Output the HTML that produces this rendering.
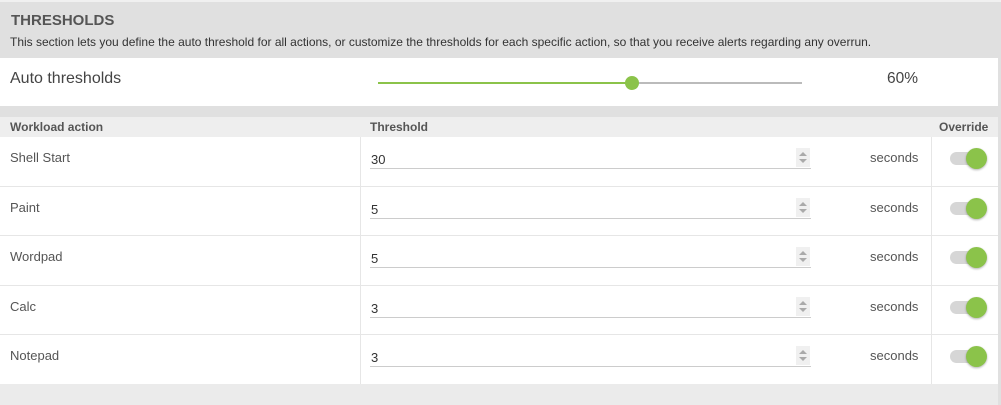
<!DOCTYPE html>
<html><head><meta charset="utf-8"><style>
*{margin:0;padding:0;box-sizing:border-box}
body{width:1001px;height:405px;background:#ebebeb;font-family:"Liberation Sans",Arial,sans-serif;position:relative;overflow:hidden;color:#444}
.a{position:absolute}
.row{position:absolute;left:0;width:998px;height:49px;background:#fff;border-bottom:1px solid #e6e6e6}
.name{position:absolute;left:10px;top:13px;font-size:13px;color:#555}
.val{position:absolute;left:371px;top:15px;font-size:13px;color:#333}
.ul{position:absolute;left:370px;top:31px;width:441px;height:1px;background:#ccc}
.spin{position:absolute;left:796px;top:11px;width:14px;height:19px;background:#f0f0f0}
.spin:before{content:"";position:absolute;left:3px;top:4px;border-left:4px solid transparent;border-right:4px solid transparent;border-bottom:4px solid #aaa}
.spin:after{content:"";position:absolute;left:3px;top:11px;border-left:4px solid transparent;border-right:4px solid transparent;border-top:4px solid #aaa}
.sec{position:absolute;left:870px;top:13px;font-size:13px;color:#555}
.d1{position:absolute;left:360px;top:0;width:1px;height:49px;background:#e6e6e6}
.d2{position:absolute;left:931px;top:0;width:1px;height:49px;background:#e6e6e6}
.tr{position:absolute;left:950px;top:15px;width:36px;height:13px;border-radius:7px;background:#d6d6d6}
.kn{position:absolute;left:966px;top:11px;width:21px;height:21px;border-radius:50%;background:#8bc34a;box-shadow:0 1px 2px rgba(0,0,0,.3)}
</style></head><body>
<div class="a" style="left:0;top:0;width:1001px;height:2px;background:#f0f0f0"></div>
<div class="a" style="left:0;top:2px;width:1001px;height:56px;background:#e0e0e0"></div>
<div class="a" style="left:11px;top:12px;font-size:15px;font-weight:bold;color:#555">THRESHOLDS</div>
<div class="a" style="left:10px;top:35px;font-size:12px;color:#333;white-space:nowrap">This section lets you define the auto threshold for all actions, or customize the thresholds for each specific action, so that you receive alerts regarding any overrun.</div>
<div class="a" style="left:0;top:58px;width:998px;height:48px;background:#fff"></div>
<div class="a" style="left:998px;top:58px;width:3px;height:347px;background:#e0e0e0"></div>
<div class="a" style="left:10px;top:70px;font-size:16px;color:#444">Auto thresholds</div>
<div class="a" style="left:378px;top:82px;width:254px;height:2px;background:#8bc34a"></div>
<div class="a" style="left:632px;top:82px;width:170px;height:2px;background:#bbb"></div>
<div class="a" style="left:625px;top:76px;width:14px;height:14px;border-radius:50%;background:#8bc34a"></div>
<div class="a" style="left:887px;top:70px;font-size:15.5px;color:#444">60%</div>
<div class="a" style="left:0;top:106px;width:998px;height:11px;background:#e0e0e0"></div>
<div class="a" style="left:0;top:117px;width:998px;height:20px;background:#eeeeee"></div>
<div class="a" style="left:10px;top:120px;font-size:12px;font-weight:bold;color:#555">Workload action</div>
<div class="a" style="left:370px;top:120px;font-size:12px;font-weight:bold;color:#555">Threshold</div>
<div class="a" style="left:939px;top:120px;font-size:12px;font-weight:bold;color:#555">Override</div>

<div class="row" style="top:137px;height:50px"><div class="d1"></div><div class="d2"></div><div class="name">Shell Start</div><div class="val">30</div><div class="ul"></div><div class="spin"></div><div class="sec">seconds</div><div class="tr"></div><div class="kn"></div></div>
<div class="row" style="top:187px"><div class="d1"></div><div class="d2"></div><div class="name">Paint</div><div class="val">5</div><div class="ul"></div><div class="spin"></div><div class="sec">seconds</div><div class="tr"></div><div class="kn"></div></div>
<div class="row" style="top:236px;height:50px"><div class="d1"></div><div class="d2"></div><div class="name">Wordpad</div><div class="val">5</div><div class="ul"></div><div class="spin"></div><div class="sec">seconds</div><div class="tr"></div><div class="kn"></div></div>
<div class="row" style="top:286px"><div class="d1"></div><div class="d2"></div><div class="name">Calc</div><div class="val">3</div><div class="ul"></div><div class="spin"></div><div class="sec">seconds</div><div class="tr"></div><div class="kn"></div></div>
<div class="row" style="top:335px;border-bottom:none"><div class="d1"></div><div class="d2"></div><div class="name">Notepad</div><div class="val">3</div><div class="ul"></div><div class="spin"></div><div class="sec">seconds</div><div class="tr"></div><div class="kn"></div></div>
</body></html>
